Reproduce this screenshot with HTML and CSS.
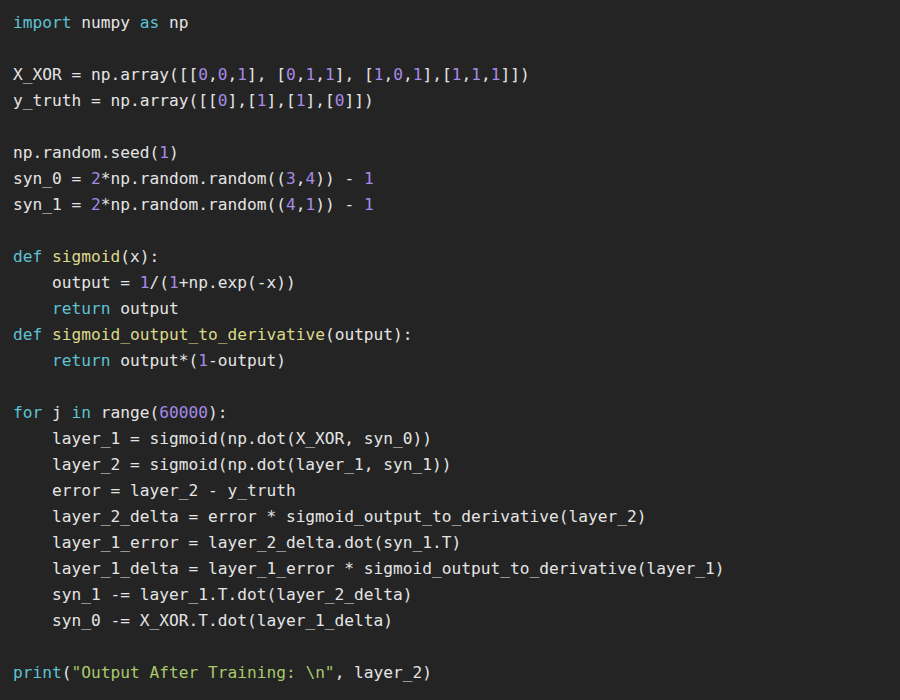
FILE: index.html
```html
<!DOCTYPE html>
<html>
<head>
<meta charset="utf-8">
<link rel="stylesheet" href="styles.css">
</head>
<body>
<pre class="code"><span class="kw">import</span> numpy <span class="kw">as</span> np

X_XOR = np.array([[<span class="num">0</span>,<span class="num">0</span>,<span class="num">1</span>], [<span class="num">0</span>,<span class="num">1</span>,<span class="num">1</span>], [<span class="num">1</span>,<span class="num">0</span>,<span class="num">1</span>],[<span class="num">1</span>,<span class="num">1</span>,<span class="num">1</span>]])
y_truth = np.array([[<span class="num">0</span>],[<span class="num">1</span>],[<span class="num">1</span>],[<span class="num">0</span>]])

np.random.seed(<span class="num">1</span>)
syn_0 = <span class="num">2</span>*np.random.random((<span class="num">3</span>,<span class="num">4</span>)) - <span class="num">1</span>
syn_1 = <span class="num">2</span>*np.random.random((<span class="num">4</span>,<span class="num">1</span>)) - <span class="num">1</span>

<span class="kw">def</span> <span class="fn">sigmoid</span>(x):
    output = <span class="num">1</span>/(<span class="num">1</span>+np.exp(-x))
    <span class="kw">return</span> output
<span class="kw">def</span> <span class="fn">sigmoid_output_to_derivative</span>(output):
    <span class="kw">return</span> output*(<span class="num">1</span>-output)

<span class="kw">for</span> j <span class="kw">in</span> range(<span class="num">60000</span>):
    layer_1 = sigmoid(np.dot(X_XOR, syn_0))
    layer_2 = sigmoid(np.dot(layer_1, syn_1))
    error = layer_2 - y_truth
    layer_2_delta = error * sigmoid_output_to_derivative(layer_2)
    layer_1_error = layer_2_delta.dot(syn_1.T)
    layer_1_delta = layer_1_error * sigmoid_output_to_derivative(layer_1)
    syn_1 -= layer_1.T.dot(layer_2_delta)
    syn_0 -= X_XOR.T.dot(layer_1_delta)

<span class="kw">print</span>(<span class="str">"Output After Training: \n"</span>, layer_2)</pre>
</body>
</html>
```
FILE: styles.css
```css
html, body {
  margin: 0;
  padding: 0;
  background: #242424;
  width: 900px;
  height: 700px;
  overflow: hidden;
}
.code {
  margin: 0;
  padding: 10px 0 0 13px;
  font-family: "DejaVu Sans Mono", "Liberation Mono", monospace;
  font-size: 16.2px;
  line-height: 26px;
  color: #e4e4e4;
}
.kw { color: #5ec2d4; }
.fn { color: #dcd98c; }
.num { color: #a58ae6; }
.str { color: #a9c96a; }
```
